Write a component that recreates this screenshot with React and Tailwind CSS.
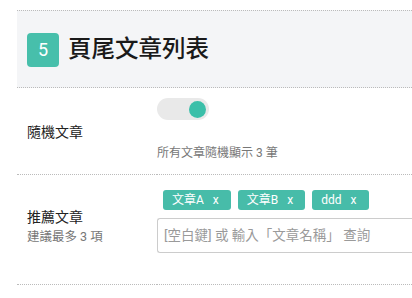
export default function App() {
  const font = { fontFamily: 'Roboto, "Noto Sans CJK TC", sans-serif' };
  const tags = ["文章A", "文章B", "ddd"];
  return (
    <div className="w-[412px] h-[298px] bg-white overflow-hidden pt-[10px] pl-[17px]" style={font}>
      <div className="grid grid-cols-[140px_1fr]">
        <div className="col-span-2 h-[78px] bg-[#f4f5f7] border-y border-dotted border-[#bbbbbb] flex items-center pl-[10px] pt-[1px]">
          <div className="w-[32px] h-[34px] rounded-[4px] bg-[#47bfab] text-white text-[18px] flex items-center justify-center">5</div>
          <div className="ml-[9px] text-[23.5px] font-medium text-[#1a1a1a] leading-none">頁尾文章列表</div>
        </div>

        <div className="h-[87px] border-b border-dotted border-[#bbbbbb] flex items-center pl-[10px] pt-[2px]">
          <span className="text-[14px] text-[#222]">隨機文章</span>
        </div>
        <div className="h-[87px] border-b border-dotted border-[#bbbbbb] pt-[10px]">
          <div className="w-[52px] h-[22px] rounded-full bg-[#e9e9e9] relative">
            <div className="absolute right-[3px] top-[2.5px] w-[17px] h-[17px] rounded-full bg-[#3bbfa9]"></div>
          </div>
          <div className="mt-[27px] text-[12px] text-[#777] leading-none">所有文章隨機顯示 3 筆</div>
        </div>

        <div className="h-[110px] border-b border-dotted border-[#bbbbbb] flex flex-col justify-center pl-[10px] pb-[6px]">
          <span className="text-[14px] text-[#222] leading-[20px]">推薦文章</span>
          <span className="text-[12.5px] text-[#777] leading-[20px]">建議最多 3 項</span>
        </div>
        <div className="h-[110px] border-b border-dotted border-[#bbbbbb] pt-[15px]">
          <div className="flex gap-[7px] pl-[6px]">
            {tags.map((t) => (
              <div key={t} className="h-[20px] rounded-[3px] bg-[#47bca9] text-white text-[12px] flex items-center pl-[9px] pr-[12px] leading-none">
                <span>{t}</span>
                <span className="ml-[9px]">x</span>
              </div>
            ))}
          </div>
          <div className="mt-[8px] h-[35px] border border-[#cccccc] border-r-0 rounded-l-[3px] flex items-center pl-[6px]">
            <span className="text-[13.5px] text-[#9a9a9a] leading-none">[空白鍵] 或 輸入「文章名稱」 查詢</span>
          </div>
        </div>
      </div>
    </div>
  );
}
